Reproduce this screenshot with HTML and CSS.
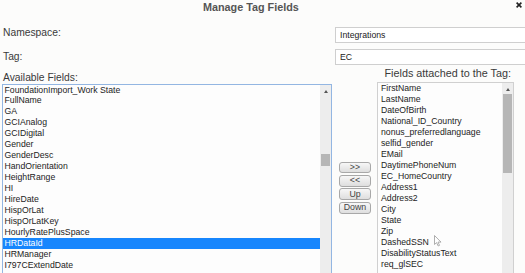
FILE: index.html
```html
<!DOCTYPE html>
<html>
<head>
<meta charset="utf-8">
<title>Manage Tag Fields</title>
<link rel="stylesheet" href="styles.css">
</head>
<body>
<div class="dialog">
  <div class="titlebar">
    <span class="title">Manage Tag Fields</span>
    <svg class="close" width="6" height="6" viewBox="0 0 6 6"><path d="M0.6 0.6 L5.4 5.4 M5.4 0.6 L0.6 5.4" stroke="#222" stroke-width="1.6" fill="none"/></svg>
  </div>

  <div class="field-row ns">
    <span class="lbl">Namespace:</span>
    <div class="input">Integrations</div>
  </div>
  <div class="field-row tag">
    <span class="lbl">Tag:</span>
    <div class="input">EC</div>
  </div>

  <div class="lists">
    <div class="col col-left">
      <div class="lbl list-lbl">Available Fields:</div>
      <div class="listbox listbox-left">
        <ul class="items">
          <li>FoundationImport_Work State</li>
          <li>FullName</li>
          <li>GA</li>
          <li>GCIAnalog</li>
          <li>GCIDigital</li>
          <li>Gender</li>
          <li>GenderDesc</li>
          <li>HandOrientation</li>
          <li>HeightRange</li>
          <li>HI</li>
          <li>HireDate</li>
          <li>HispOrLat</li>
          <li>HispOrLatKey</li>
          <li>HourlyRatePlusSpace</li>
          <li class="selected">HRDataId</li>
          <li>HRManager</li>
          <li>I797CExtendDate</li>
        </ul>
        <div class="vscroll">
          <span class="arrow"></span>
          <span class="thumb thumb-left"></span>
        </div>
      </div>
    </div>

    <div class="buttons">
      <button class="btn">&gt;&gt;</button>
      <button class="btn">&lt;&lt;</button>
      <button class="btn">Up</button>
      <button class="btn">Down</button>
    </div>

    <div class="col col-right">
      <div class="right-lbl">Fields attached to the Tag:</div>
      <div class="listbox listbox-right">
        <ul class="items">
          <li>FirstName</li>
          <li>LastName</li>
          <li>DateOfBirth</li>
          <li>National_ID_Country</li>
          <li>nonus_preferredlanguage</li>
          <li>selfid_gender</li>
          <li>EMail</li>
          <li>DaytimePhoneNum</li>
          <li>EC_HomeCountry</li>
          <li>Address1</li>
          <li>Address2</li>
          <li>City</li>
          <li>State</li>
          <li>Zip</li>
          <li>DashedSSN</li>
          <li>DisabilityStatusText</li>
          <li>req_glSEC</li>
        </ul>
        <div class="vscroll">
          <span class="arrow"></span>
          <span class="thumb thumb-right"></span>
        </div>
      </div>
    </div>
  </div>

  <svg class="cursor" width="8" height="12" viewBox="0 0 8 12"><path d="M0.5 0.5 L0.5 9.5 L2.6 7.6 L4.2 11 L5.5 10.4 L4 7.1 L7 7.1 Z" fill="#fff" stroke="#9a9a9a" stroke-width="0.8" stroke-linejoin="round"/></svg>
</div>
</body>
</html>
```

FILE: styles.css
```css
html, body {
  margin: 0;
  padding: 0;
  background: #fcfcfb;
}

.dialog {
  position: relative;
  width: 525px;
  height: 273px;
  overflow: hidden;
  font-family: "Liberation Sans", Arial, sans-serif;
  color: #333;
}

.titlebar {
  display: flex;
  align-items: flex-start;
  height: 12px;
}

.title {
  padding-left: 203px;
  font-size: 10.8px;
  font-weight: bold;
  line-height: 12px;
  color: #555;
  margin-top: 1px;
}

.close {
  margin-left: auto;
  margin-right: 3px;
  margin-top: 2px;
}

.field-row {
  display: flex;
  align-items: flex-start;
  height: 16px;
}

.field-row.ns {
  margin-top: 15px;
}

.field-row.tag {
  margin-top: 6px;
}

.lbl {
  font-size: 10.3px;
  line-height: 12px;
  color: #3a3a3a;
  padding-left: 3px;
}

.field-row .lbl {
  width: 332px;
  flex: none;
}

.tag .lbl {
  margin-top: 2px;
}

.input {
  box-sizing: border-box;
  width: 220px;
  height: 16px;
  flex: none;
  border: 1px solid #cfcfcf;
  background: #fff;
  font-size: 8.7px;
  line-height: 14px;
  padding-left: 4px;
  color: #222;
}

.lists {
  display: flex;
  align-items: flex-start;
}

.col {
  display: flex;
  flex-direction: column;
}

.col-left {
  margin-left: 1.5px;
  width: 330.5px;
}

.list-lbl {
  margin-top: 6.5px;
  padding-left: 1.5px;
}

.listbox {
  box-sizing: border-box;
  display: flex;
  height: 200px;
  background: #fdfdfd;
}

.listbox-left {
  border: 1px solid #93b6e2;
  width: 330.5px;
}

.items {
  list-style: none;
  margin: 0;
  padding: 0;
  flex: 1;
  font-size: 8.7px;
  line-height: 10.95px;
  color: #1c1c1c;
  white-space: nowrap;
  overflow: hidden;
}

.listbox-left .items li {
  padding-left: 1.5px;
  margin-left: 0.5px;
}

.items li.selected {
  background: #1786fd;
  color: #fff;
}

.vscroll {
  width: 11px;
  flex: none;
  background: #ededed;
  display: flex;
  flex-direction: column;
  align-items: center;
}

.arrow {
  width: 0;
  height: 0;
  margin-top: 5px;
  border-left: 2.5px solid transparent;
  border-right: 2.5px solid transparent;
  border-bottom: 3px solid #555;
}

.thumb {
  width: 9px;
  background: #b6b6b6;
}

.thumb-left {
  margin-top: 61px;
  height: 12px;
}

.thumb-right {
  margin-top: 3px;
  height: 79px;
}

.buttons {
  display: flex;
  flex-direction: column;
  gap: 1.9px;
  margin-left: 7px;
  padding-top: 96.5px;
  width: 32px;
}

.btn {
  box-sizing: border-box;
  width: 32px;
  height: 11.6px;
  padding: 0;
  border: 1px solid #a8a8a8;
  border-radius: 3px;
  background: linear-gradient(#f7f7f7, #dedede);
  font-family: "Liberation Sans", Arial, sans-serif;
  font-size: 8.8px;
  line-height: 9px;
  color: #444;
}

.col-right {
  margin-left: 6px;
  width: 137px;
}

.right-lbl {
  font-size: 10.8px;
  line-height: 12px;
  color: #3a3a3a;
  margin-top: 1.6px;
  margin-bottom: 3.9px;
  padding-left: 7.5px;
  white-space: nowrap;
}

.listbox-right {
  border: 1px solid #d0d0d0;
  width: 137px;
}

.listbox-right .items li {
  padding-left: 3px;
}

.cursor {
  position: absolute;
  left: 434px;
  top: 235px;
}
```
